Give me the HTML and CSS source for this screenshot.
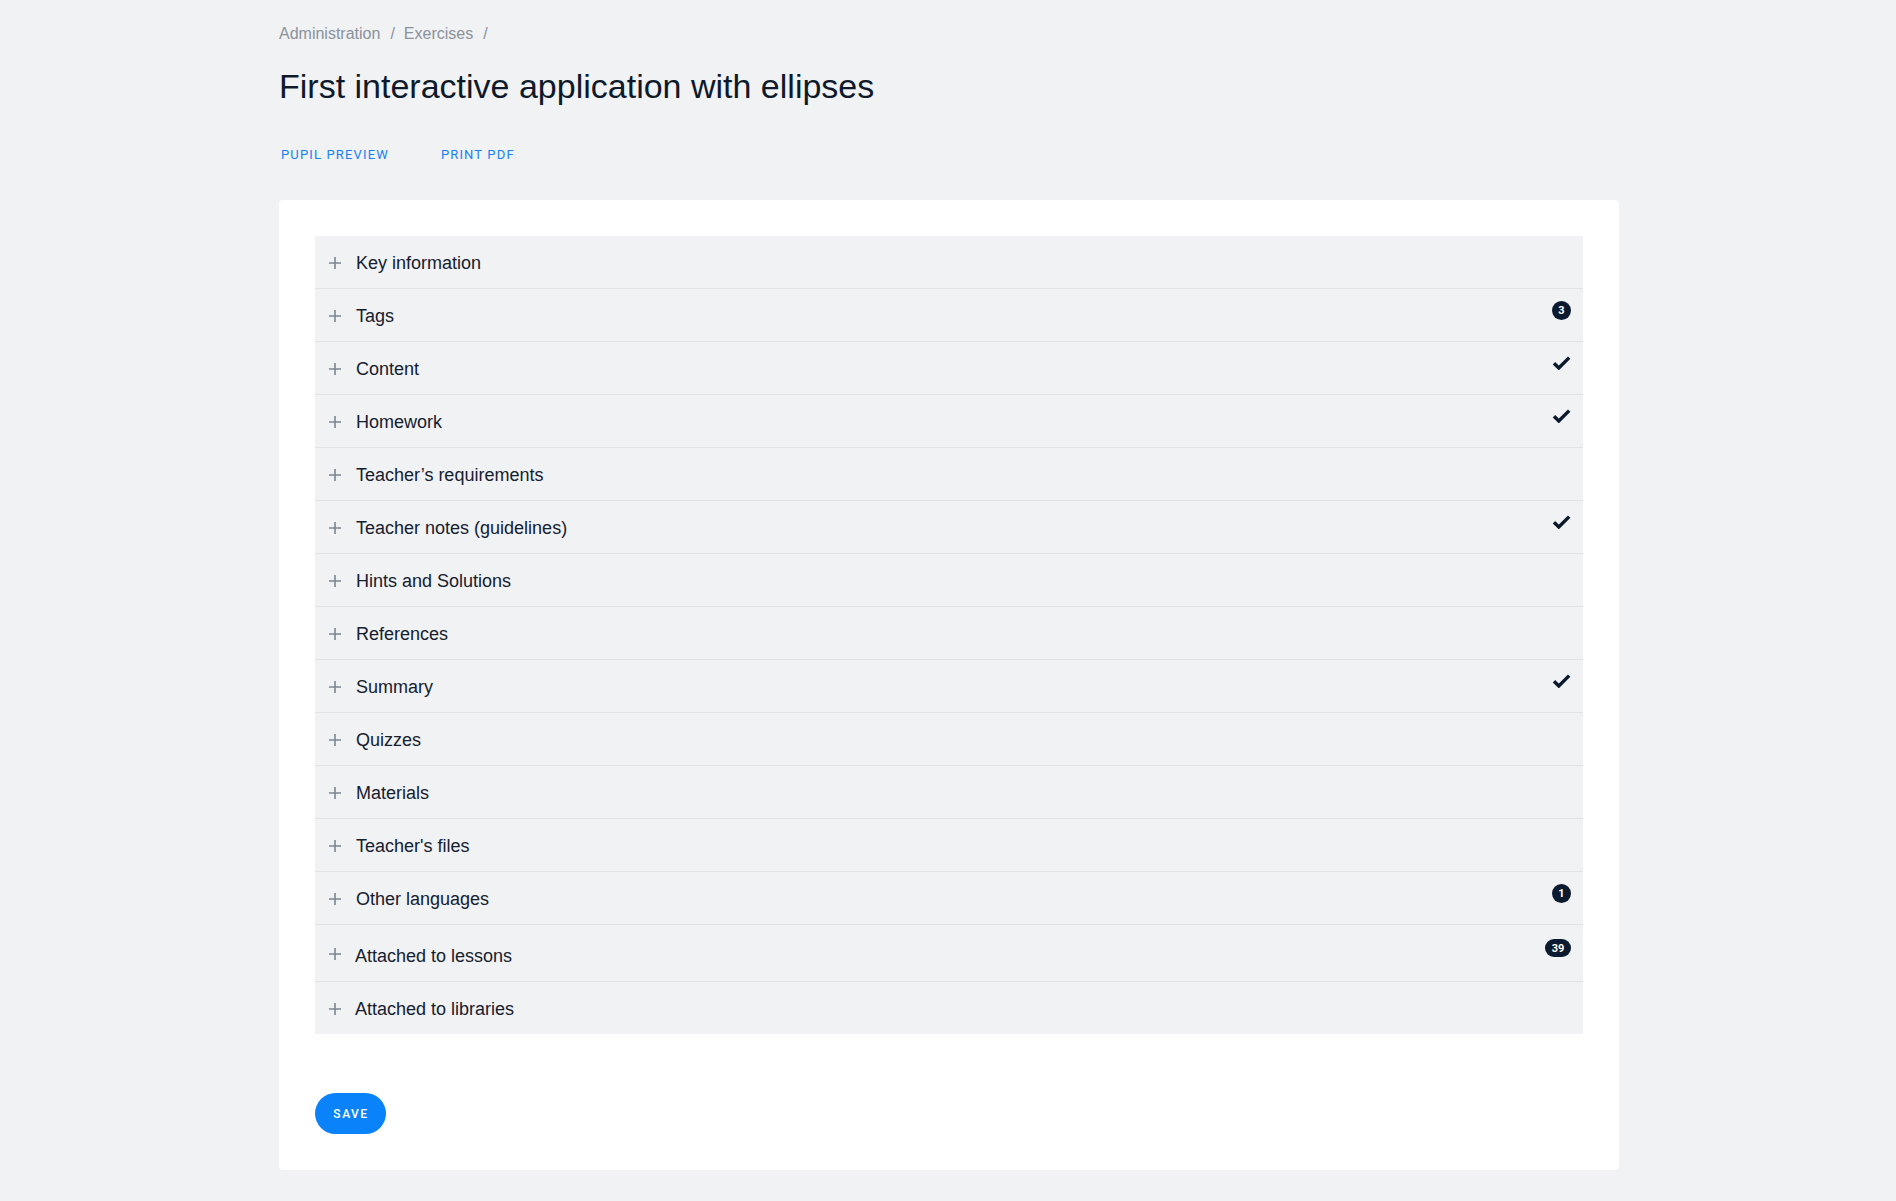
FILE: index.html
```html
<!DOCTYPE html>
<html lang="en">
<head>
<meta charset="utf-8">
<title>First interactive application with ellipses</title>
<link rel="stylesheet" href="styles.css">
</head>
<body>
<div class="page">
  <nav class="breadcrumb">
    <span class="crumb">Administration</span><span class="sep">/</span><span class="crumb">Exercises</span><span class="sep">/</span>
  </nav>
  <h1 class="title">First interactive application with ellipses</h1>
  <div class="actions">
    <a class="action">PUPIL PREVIEW</a>
    <a class="action">PRINT PDF</a>
  </div>

  <section class="card">
    <div class="accordion">
      <div class="row"><span class="plus"><svg viewBox="0 0 12 12" width="12" height="12"><path d="M6 0V12M0 6H12"/></svg></span><span class="label">Key information</span></div>
      <div class="row"><span class="plus"><svg viewBox="0 0 12 12" width="12" height="12"><path d="M6 0V12M0 6H12"/></svg></span><span class="label">Tags</span><span class="ind"><span class="badge">3</span></span></div>
      <div class="row"><span class="plus"><svg viewBox="0 0 12 12" width="12" height="12"><path d="M6 0V12M0 6H12"/></svg></span><span class="label">Content</span><span class="ind"><svg class="check" viewBox="0 0 19 14" width="19" height="14"><path d="M2 7.2L6.8 12L17.2 1.6"/></svg></span></div>
      <div class="row"><span class="plus"><svg viewBox="0 0 12 12" width="12" height="12"><path d="M6 0V12M0 6H12"/></svg></span><span class="label">Homework</span><span class="ind"><svg class="check" viewBox="0 0 19 14" width="19" height="14"><path d="M2 7.2L6.8 12L17.2 1.6"/></svg></span></div>
      <div class="row"><span class="plus"><svg viewBox="0 0 12 12" width="12" height="12"><path d="M6 0V12M0 6H12"/></svg></span><span class="label">Teacher’s requirements</span></div>
      <div class="row"><span class="plus"><svg viewBox="0 0 12 12" width="12" height="12"><path d="M6 0V12M0 6H12"/></svg></span><span class="label">Teacher notes (guidelines)</span><span class="ind"><svg class="check" viewBox="0 0 19 14" width="19" height="14"><path d="M2 7.2L6.8 12L17.2 1.6"/></svg></span></div>
      <div class="row"><span class="plus"><svg viewBox="0 0 12 12" width="12" height="12"><path d="M6 0V12M0 6H12"/></svg></span><span class="label">Hints and Solutions</span></div>
      <div class="row"><span class="plus"><svg viewBox="0 0 12 12" width="12" height="12"><path d="M6 0V12M0 6H12"/></svg></span><span class="label">References</span></div>
      <div class="row"><span class="plus"><svg viewBox="0 0 12 12" width="12" height="12"><path d="M6 0V12M0 6H12"/></svg></span><span class="label">Summary</span><span class="ind"><svg class="check" viewBox="0 0 19 14" width="19" height="14"><path d="M2 7.2L6.8 12L17.2 1.6"/></svg></span></div>
      <div class="row"><span class="plus"><svg viewBox="0 0 12 12" width="12" height="12"><path d="M6 0V12M0 6H12"/></svg></span><span class="label">Quizzes</span></div>
      <div class="row"><span class="plus"><svg viewBox="0 0 12 12" width="12" height="12"><path d="M6 0V12M0 6H12"/></svg></span><span class="label">Materials</span></div>
      <div class="row"><span class="plus"><svg viewBox="0 0 12 12" width="12" height="12"><path d="M6 0V12M0 6H12"/></svg></span><span class="label">Teacher's files</span></div>
      <div class="row"><span class="plus"><svg viewBox="0 0 12 12" width="12" height="12"><path d="M6 0V12M0 6H12"/></svg></span><span class="label">Other languages</span><span class="ind"><span class="badge">1</span></span></div>
      <div class="row row--tall"><span class="plus"><svg viewBox="0 0 12 12" width="12" height="12"><path d="M6 0V12M0 6H12"/></svg></span><span class="label label--tight">Attached to lessons</span><span class="ind ind--tall"><span class="badge badge--wide">39</span></span></div>
      <div class="row"><span class="plus"><svg viewBox="0 0 12 12" width="12" height="12"><path d="M6 0V12M0 6H12"/></svg></span><span class="label label--tight">Attached to libraries</span></div>
    </div>
    <div class="footer">
      <button class="save">SAVE</button>
    </div>
  </section>
</div>
</body>
</html>
```

FILE: styles.css
```css
html, body {
  margin: 0;
  padding: 0;
}
body {
  background: #f1f2f4;
  font-family: "Liberation Sans", Arial, sans-serif;
  color: #13202f;
}
.page {
  width: 1340px;
  margin: 0 277px 0 279px;
  padding-top: 22px;
  padding-bottom: 20px;
}
.breadcrumb {
  font-size: 16px;
  line-height: 24px;
  color: #8a919b;
}
.sep {
  margin: 0 9px 0 10px;
}
.title {
  margin: 20px 0 0;
  font-size: 34px;
  line-height: 40px;
  font-weight: 400;
  color: #0e1a2b;
}
.actions {
  display: flex;
  gap: 52px;
  margin-top: 38px;
  padding-left: 2px;
  height: 21px;
}
.action {
  font-family: Roboto, "Liberation Sans", sans-serif;
  font-size: 13px;
  line-height: 21px;
  letter-spacing: 1.15px;
  color: #1681f4;
  text-decoration: none;
}
.card {
  margin-top: 35px;
  background: #ffffff;
  border-radius: 4px;
  padding: 36px;
}
.accordion {
  background: #f1f2f4;
}
.row {
  display: flex;
  align-items: center;
  height: 52px;
  padding: 0 12px 0 13px;
  border-bottom: 1px solid #e1e3e7;
}
.row:last-child {
  border-bottom: none;
}
.row--tall {
  height: 56px;
}
.plus {
  display: flex;
  width: 13px;
  height: 13px;
  align-items: center;
  justify-content: center;
  margin-right: 15px;
  margin-top: 1px;
}
.plus svg {
  stroke: #7b8591;
  stroke-width: 1.6;
  fill: none;
}
.label {
  flex: 1;
  font-size: 18px;
  line-height: 24px;
  color: #15202f;
  padding-top: 2px;
}
.row--tall .label {
  padding-top: 5px;
}
.label--tight {
  margin-left: -1px;
}
.ind {
  display: flex;
  align-items: center;
  margin-bottom: 10px;
}
.check {
  stroke: #0b192c;
  stroke-width: 3.4;
  fill: none;
  stroke-linecap: butt;
  stroke-linejoin: miter;
}
.badge {
  display: inline-flex;
  align-items: center;
  justify-content: center;
  min-width: 19px;
  height: 19px;
  box-sizing: border-box;
  border-radius: 10px;
  background: #0b1a2e;
  color: #ffffff;
  font-family: Roboto, "Liberation Sans", sans-serif;
  font-size: 11px;
  font-weight: 700;
}
.badge--wide {
  width: 26px;
  height: 18px;
  padding: 0 4px;
}
.footer {
  margin-top: 59px;
}
.save {
  display: inline-flex;
  align-items: center;
  justify-content: center;
  width: 71px;
  height: 41px;
  border: none;
  border-radius: 21px;
  background: #0a82fa;
  color: #ffffff;
  font-family: Roboto, "Liberation Sans", sans-serif;
  font-size: 12px;
  font-weight: 500;
  letter-spacing: 1.5px;
  padding: 0 0 0 1px;
  cursor: pointer;
}
```
